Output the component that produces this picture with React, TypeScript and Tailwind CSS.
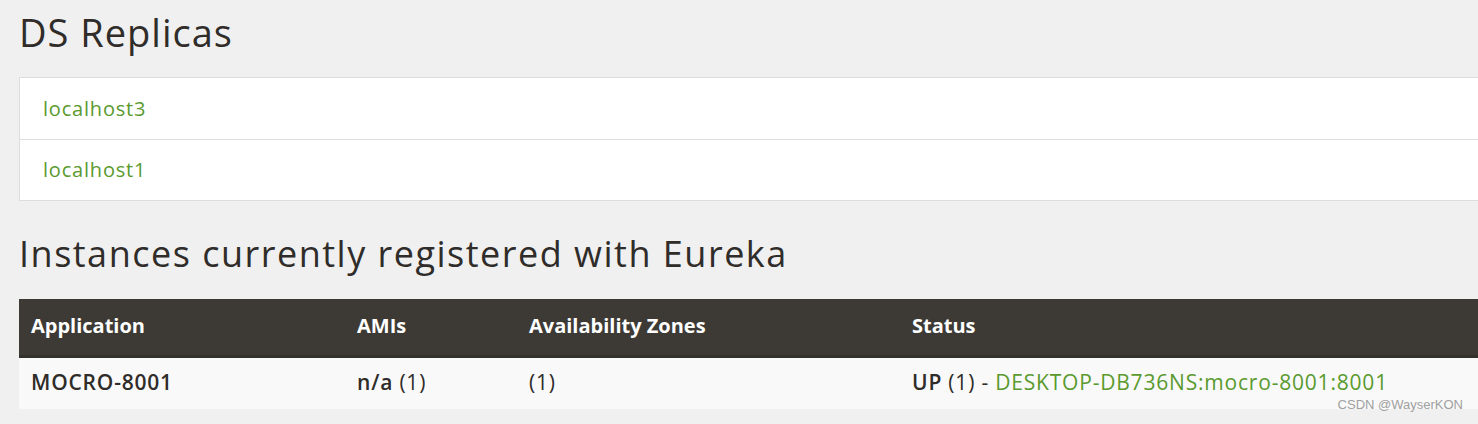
import React from "react";

const replicas = ["localhost3", "localhost1"];

export default function App() {
  return (
    <div
      className="relative h-[424px] w-[1478px] overflow-hidden bg-[#f0f0f0] text-[#333333]"
      style={{ fontFamily: '"Open Sans", "Liberation Sans", sans-serif' }}
    >
      <div className="pl-[19px]">
        <h1 className="m-0 h-[77px] pt-[8px] text-[38px] leading-[48px] font-normal tracking-[1px] text-[#2f2c29]">
          DS Replicas
        </h1>
        <div className="-mr-4 border border-[#dddddd] bg-white">
          {replicas.map((r, i) => (
            <div
              key={r}
              className={
                "flex h-[61px] items-center px-[23px] text-[20px] tracking-[0.8px] text-[#5a9a2e] " +
                (i > 0 ? "border-t border-[#dddddd]" : "")
              }
            >
              {r}
            </div>
          ))}
        </div>
        <h2 className="m-0 h-[98px] pt-[31px] text-[36px] leading-[44px] font-normal tracking-[1.5px] text-[#2f2c29]">
          Instances currently registered with Eureka
        </h2>
        <table className="-mr-4 w-[1480px] border-collapse">
          <thead>
            <tr className="h-[57px] border-b-[3px] border-[#34312d] bg-[#3d3a35] text-left text-[20px] text-white">
              <th className="w-[326px] px-[12px] pb-[2px] font-bold">Application</th>
              <th className="w-[172px] px-[12px] pb-[2px] font-bold">AMIs</th>
              <th className="w-[383px] px-[12px] pb-[2px] font-bold">Availability Zones</th>
              <th className="px-[12px] pb-[2px] font-bold">Status</th>
            </tr>
          </thead>
          <tbody>
            <tr className="h-[53px] bg-[#f9f9f9] text-[21px] tracking-[0.8px] text-[#2f2c29]">
              <td className="px-[12px] pb-[2px] font-semibold">MOCRO-8001</td>
              <td className="px-[12px] pb-[2px]">
                <b className="font-semibold">n/a</b> (1)
              </td>
              <td className="px-[12px] pb-[2px]">(1)</td>
              <td className="px-[12px] pb-[2px]">
                <b className="font-semibold">UP</b> (1) -{" "}
                <a className="text-[#5a9a2e]">DESKTOP-DB736NS:mocro-8001:8001</a>
              </td>
            </tr>
          </tbody>
        </table>
      </div>
      <div
        className="absolute right-[15px] bottom-[10px] text-[13px] text-[#a0a0a0]"
        style={{ fontFamily: '"Liberation Sans", Arial, sans-serif' }}
      >
        CSDN @WayserKON
      </div>
    </div>
  );
}
